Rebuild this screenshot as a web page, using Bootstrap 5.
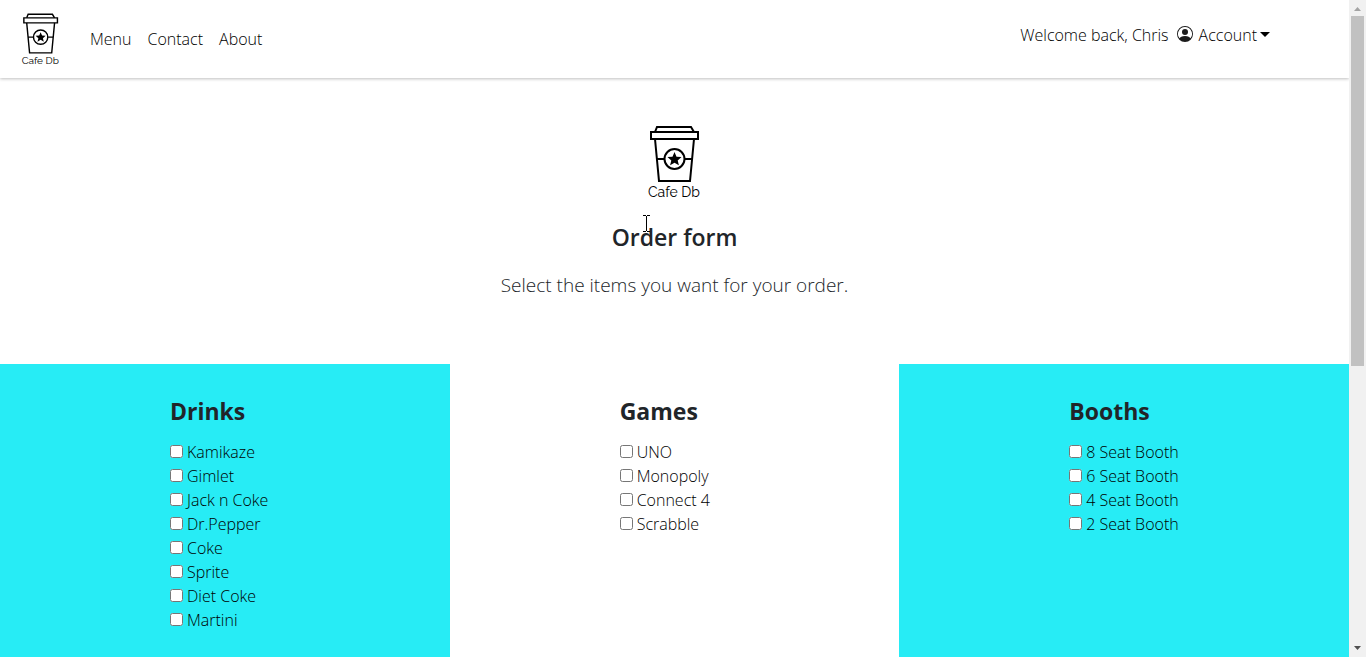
<!DOCTYPE html>
<html lang="en">
<head>
<meta charset="utf-8">
<meta name="viewport" content="width=device-width, initial-scale=1">
<title>Cafe Db - Order form</title>
<link href="https://cdn.jsdelivr.net/npm/bootstrap@5.3.0/dist/css/bootstrap.min.css" rel="stylesheet">
<style>
  body { font-family: "Open Sans", "Noto Sans", sans-serif; font-size: 16px; font-weight: 300; line-height: 24px; color: #000; }
  .site-header { height: 78px; box-shadow: 0 1px 3px rgba(0, 0, 0, .25); }
  .site-header a { color: #000; }
  .brand-link { width: 40px; margin: 2px 21px 0; }
  .brand-link svg { width: 40px; height: 56px; }
  .account-bar { margin-right: 79px; margin-bottom: 8px; color: #000; }
  .account-bar svg { margin: 0 6px 3px 8px; }
  .account-bar .dropdown-toggle::after { margin-left: 3px; border-width: 5px 5px 0; }
  .hero { padding-top: 46px; height: 286px; }
  .hero svg.logo { width: 56px; height: 78px; }
  .hero h1 { font-size: 23px; line-height: 28px; font-weight: 600; margin: 21px 0 0; color: #212529; }
  .hero p { font-size: 19px; line-height: 30px; font-weight: 300; margin: 19px 0 0; color: #212529; }
  .logo text { font-family: "Raleway", "Lato", sans-serif; font-size: 14px; font-weight: 400; }
  .cyan { background: #27ecf5; }
  .choices { padding: 33px 0 32px min(170px, 38%); }
  .choices h2 { font-size: 23px; line-height: 28px; font-weight: 700; margin: 0 0 15px; color: #212529; }
  .choices input { width: 13px; height: 13px; margin: 0 0 2px; }
  .text-cursor { position: absolute; left: calc(50% - 32px); top: 137px; }
  .scroll-rail { width: 17px; background: #f1f1f1; }
  .scroll-thumb { width: 13px; height: 350px; background: #c1c1c1; }
</style>
</head>
<body class="bg-white">
<svg class="d-none" aria-hidden="true">
  <symbol id="cup" viewBox="0 0 56 78">
    <g fill="none" stroke="#000" stroke-width="2">
      <path d="M8 8 10 3H44L47 8"/>
      <path d="M4 8H51V15H4Z"/>
      <path d="M8 15 12 57H43L47 15M10 35H17M38 35H46"/>
      <circle cx="27.500" cy="35" r="10"/>
    </g>
    <path d="M27.500 28 29.500 32.700 34.500 33.100 30.700 36.400 31.900 41.300 27.500 38.700 23.100 41.300 24.300 36.400 20.500 33.100 25.500 32.700Z"/>
  </symbol>
</svg>
<div class="d-flex vh-100 overflow-hidden">
  <div class="flex-grow-1 overflow-hidden">
    <header class="site-header d-flex align-items-center bg-white position-relative">
      <a class="brand-link" href="#" aria-label="Cafe Db home">
        <svg class="logo d-block" viewBox="0 0 56 78"><use href="#cup" width="56" height="78"/><text x="27" y="73" text-anchor="middle">Cafe Db</text></svg>
      </a>
      <nav class="nav">
        <a class="nav-link p-2" href="#">Menu</a>
        <a class="nav-link p-2" href="#">Contact</a>
        <a class="nav-link p-2" href="#">About</a>
      </nav>
      <div class="account-bar ms-auto d-flex align-items-center">
        <span>Welcome back, Chris</span>
        <svg width="16" height="16" viewBox="0 0 16 16" fill="#1b1b1b"><path d="M11 6a3 3 0 1 1-6 0 3 3 0 0 1 6 0z"/><path fill-rule="evenodd" d="M0 8a8 8 0 1 1 16 0A8 8 0 0 1 0 8zm8-7a7 7 0 0 0-5.468 11.370C3.242 11.226 4.805 10 8 10s4.757 1.225 5.468 2.370A7 7 0 0 0 8 1z"/></svg>
        <a class="dropdown-toggle text-decoration-none" href="#" role="button" data-bs-toggle="dropdown" aria-expanded="false">Account</a>
      </div>
    </header>
    <main>
      <section class="hero text-center position-relative">
        <svg class="logo d-block mx-auto" viewBox="0 0 56 78"><use href="#cup" width="56" height="78"/><text x="27" y="73" text-anchor="middle">Cafe Db</text></svg>
        <h1>Order form</h1>
        <p>Select the items you want for your order.</p>
        <svg class="text-cursor" width="8" height="17" viewBox="0 0 8 17" fill="none" stroke="#000" aria-hidden="true"><path d="M0 .5H3M4 .5H7M3.500 1V16M0 16.500H3M4 16.500H7"/></svg>
      </section>
      <form class="row g-0">
        <section class="col-4 cyan"><div class="choices">
          <h2>Drinks</h2>
          <label class="d-flex align-items-center gap-1"><input type="checkbox">Kamikaze</label>
          <label class="d-flex align-items-center gap-1"><input type="checkbox">Gimlet</label>
          <label class="d-flex align-items-center gap-1"><input type="checkbox">Jack n Coke</label>
          <label class="d-flex align-items-center gap-1"><input type="checkbox">Dr.Pepper</label>
          <label class="d-flex align-items-center gap-1"><input type="checkbox">Coke</label>
          <label class="d-flex align-items-center gap-1"><input type="checkbox">Sprite</label>
          <label class="d-flex align-items-center gap-1"><input type="checkbox">Diet Coke</label>
          <label class="d-flex align-items-center gap-1"><input type="checkbox">Martini</label>
        </div></section>
        <section class="col-4"><div class="choices">
          <h2>Games</h2>
          <label class="d-flex align-items-center gap-1"><input type="checkbox">UNO</label>
          <label class="d-flex align-items-center gap-1"><input type="checkbox">Monopoly</label>
          <label class="d-flex align-items-center gap-1"><input type="checkbox">Connect 4</label>
          <label class="d-flex align-items-center gap-1"><input type="checkbox">Scrabble</label>
        </div></section>
        <section class="col-4 cyan"><div class="choices">
          <h2>Booths</h2>
          <label class="d-flex align-items-center gap-1"><input type="checkbox">8 Seat Booth</label>
          <label class="d-flex align-items-center gap-1"><input type="checkbox">6 Seat Booth</label>
          <label class="d-flex align-items-center gap-1"><input type="checkbox">4 Seat Booth</label>
          <label class="d-flex align-items-center gap-1"><input type="checkbox">2 Seat Booth</label>
        </div></section>
      </form>
    </main>
  </div>
  <div class="scroll-rail flex-shrink-0 d-flex flex-column align-items-center" aria-hidden="true">
    <svg width="17" height="16" viewBox="0 0 17 16"><path fill="#a3a3a3" d="M5 11h7L8.500 7z"/></svg>
    <div class="scroll-thumb"></div>
    <svg class="mt-auto" width="17" height="17" viewBox="0 0 17 17"><path fill="#505050" d="M5 6h7L8.500 10z"/></svg>
  </div>
</div>
<script src="https://cdn.jsdelivr.net/npm/bootstrap@5.3.0/dist/js/bootstrap.bundle.min.js"></script>
</body>
</html>
